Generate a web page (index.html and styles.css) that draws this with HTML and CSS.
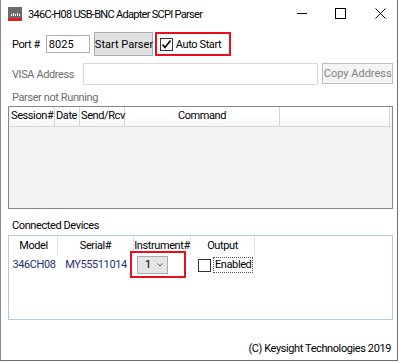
FILE: index.html
```html
<!DOCTYPE html>
<html lang="en">
<head>
    <meta charset="UTF-8">
    <title>346C-H08 USB-BNC Adapter SCPI Parser</title>
    <link rel="stylesheet" href="styles.css">
</head>
<body>
    <div class="window">
        <div class="titlebar">
            <div class="app-icon">
                <svg width="14" height="14" viewBox="0 0 14 14">
                    <rect x="0" y="0" width="14" height="11" fill="#6b6b6b"/>
                    <rect x="0" y="11" width="14" height="3" fill="#e01b24"/>
                    <rect x="3" y="7" width="1" height="2" fill="#fff"/>
                    <rect x="5" y="6" width="1" height="3" fill="#fff"/>
                    <rect x="7" y="7" width="1" height="2" fill="#fff"/>
                    <rect x="9" y="6" width="1" height="3" fill="#fff"/>
                    <rect x="11" y="7" width="1" height="2" fill="#fff"/>
                </svg>
            </div>
            <div class="title">346C-H08 USB-BNC Adapter SCPI Parser</div>
            <div class="controls">
                <svg class="ctl" width="46" height="30" viewBox="0 0 46 30">
                    <line x1="26" y1="13.5" x2="36" y2="13.5" stroke="#000" stroke-width="1"/>
                </svg>
                <svg class="ctl" width="40" height="30" viewBox="0 0 40 30">
                    <rect x="18.5" y="8.5" width="10" height="10" fill="none" stroke="#000" stroke-width="1"/>
                </svg>
                <svg class="ctl" width="40" height="30" viewBox="0 0 40 30">
                    <path d="M18.5 8.5 L28.5 18.5 M28.5 8.5 L18.5 18.5" stroke="#000" stroke-width="1"/>
                </svg>
            </div>
        </div>

        <div class="content">
            <div class="row port-row">
                <label class="lbl">Port #</label>
                <input class="port-input" type="text" value="8025">
                <button class="btn start-btn">Start Parser</button>
                <div class="highlight auto-start">
                    <span class="checkbox">
                        <svg width="11" height="11" viewBox="0 0 11 11">
                            <path d="M1.5 5.5 L4 8.5 L9.5 1.5" fill="none" stroke="#000" stroke-width="1.6"/>
                        </svg>
                    </span>
                    <span>Auto Start</span>
                </div>
            </div>

            <div class="row visa-row">
                <label class="lbl">VISA Address</label>
                <input class="visa-input" type="text" disabled>
                <button class="btn copy-btn" disabled>Copy Address</button>
            </div>

            <div class="status">Parser not Running</div>

            <div class="grid log-grid">
                <div class="grid-head">
                    <div class="hcell" style="width: 45px">Session#</div>
                    <div class="hcell" style="width: 25px">Date</div>
                    <div class="hcell" style="width: 45px">Send/Rcv</div>
                    <div class="hcell" style="width: 155px">Command</div>
                    <div class="hcell" style="width: 110px"></div>
                </div>
            </div>

            <div class="section-label">Connected Devices</div>

            <div class="grid dev-grid">
                <div class="grid-head">
                    <div class="hcell" style="width: 48px">Model</div>
                    <div class="hcell" style="width: 76px">Serial#</div>
                    <div class="hcell" style="width: 57px">Instrument#</div>
                    <div class="hcell" style="width: 64px">Output</div>
                </div>
                <div class="grid-row">
                    <div class="cell" style="width: 48px">346CH08</div>
                    <div class="cell" style="width: 76px">MY55511014</div>
                    <div class="cell inst-cell" style="width: 57px">
                        <div class="combo">
                            <span>1</span>
                            <svg width="6" height="4" viewBox="0 0 6 4">
                                <path d="M0.5 0.5 L3 3 L5.5 0.5" fill="none" stroke="#555" stroke-width="1"/>
                            </svg>
                        </div>
                        <div class="highlight-box"></div>
                    </div>
                    <div class="cell out-cell" style="width: 64px">
                        <span class="checkbox"></span>
                        <span class="focus-text">Enabled</span>
                    </div>
                </div>
            </div>

            <div class="footer">(C) Keysight Technologies 2019</div>
        </div>
    </div>
</body>
</html>
```

FILE: styles.css
```css
body {
    margin: 0;
    background-color: #fff;
    font-family: 'Roboto', 'Liberation Sans', sans-serif;
    font-size: 11px;
    letter-spacing: -0.4px;
    color: #000;
}

.window {
    width: 396px;
    height: 360px;
    background-color: #fff;
    border-left: 1px solid #8a8a8a;
    border-right: 1px solid #6e6e6e;
    border-bottom: 1px solid #6e6e6e;
    box-sizing: content-box;
    overflow: hidden;
}

.titlebar {
    display: flex;
    align-items: center;
    height: 30px;
}

.app-icon {
    width: 14px;
    height: 14px;
    margin-left: 7px;
    margin-top: -3px;
}

.title {
    margin-left: 6px;
    margin-top: -2px;
    font-size: 11px;
    letter-spacing: -0.7px;
    flex: 1;
    white-space: nowrap;
}

.controls {
    display: flex;
}

.ctl {
    display: block;
}

.content {
    padding: 0 4px 0 7px;
}

.row {
    display: flex;
    align-items: center;
    white-space: nowrap;
}

.lbl {
    margin-left: 4px;
}

.port-row {
    margin-top: 2px;
    height: 24px;
}

.port-input {
    margin-left: 6px;
    width: 44px;
    height: 18px;
    box-sizing: border-box;
    border: 1px solid #abadb3;
    font: inherit;
    padding: 0 2px;
}

.btn {
    font: inherit;
    color: #000;
    background-color: #e1e1e1;
    border: 1px solid #adadad;
    padding: 0;
    box-sizing: border-box;
    white-space: nowrap;
}

.start-btn {
    margin-left: 4px;
    width: 59px;
    height: 24px;
}

.highlight {
    border: 2px solid #e8101a;
    box-sizing: border-box;
}

.auto-start {
    margin-left: 2px;
    width: 76px;
    height: 24px;
    display: flex;
    align-items: center;
    gap: 3px;
    padding-left: 3px;
}

.checkbox {
    display: inline-flex;
    align-items: center;
    justify-content: center;
    flex-shrink: 0;
    width: 13px;
    height: 13px;
    box-sizing: border-box;
    border: 1px solid #333;
    background-color: #fff;
}

.visa-row {
    margin-top: 7px;
    height: 22px;
}

.visa-input {
    margin-left: 9px;
    width: 237px;
    height: 22px;
    box-sizing: border-box;
    border: 1px solid #d9d9d9;
    background-color: #fff;
}

.visa-row .lbl,
.status {
    color: #6d6d6d;
}

.copy-btn {
    margin-left: 4px;
    width: 71px;
    height: 21px;
    color: #838383;
    background-color: #f4f4f4;
    border-color: #bfbfbf;
    margin-top: -1px;
}

.status {
    margin: 4px 0 0 4px;
    height: 17px;
    line-height: 17px;
}

.grid {
    width: 385px;
    box-sizing: border-box;
}

.log-grid {
    margin-top: 0;
    height: 103px;
    border: 1px solid #828790;
    background-color: #f2f2f2;
}

.grid-head {
    display: flex;
    height: 19px;
    margin-left: 1px;
    background: linear-gradient(#fff, #fff 50%, #f4f4f4);
    border-bottom: 1px solid #d5d5d5;
}

.log-grid .grid-head {
    width: 381px;
}

.hcell {
    box-sizing: border-box;
    border-right: 1px solid #d5d5d5;
    text-align: center;
    line-height: 18px;
    white-space: nowrap;
}

.log-grid .hcell:first-child,
.log-grid .hcell:nth-child(2),
.log-grid .hcell:nth-child(3) {
    text-align: left;
    padding-left: 1px;
}

.section-label {
    margin: 8px 0 0 4px;
    height: 18px;
    line-height: 18px;
}

.dev-grid {
    margin-top: 0;
    height: 85px;
    border: 1px solid #b4cce2;
    background-color: #fff;
}

.dev-grid .grid-head {
    background: #fff;
    border-bottom: none;
}

.dev-grid .hcell {
    line-height: 20px;
    border-right-color: #e3e3e3;
}

.grid-row {
    display: flex;
    height: 20px;
    margin-left: 1px;
}

.cell {
    box-sizing: border-box;
    line-height: 20px;
    color: #27306e;
    white-space: nowrap;
    text-align: center;
}

.inst-cell {
    position: relative;
}

.combo {
    display: flex;
    align-items: center;
    gap: 6px;
    width: 31px;
    height: 18px;
    margin: 1px 0 0 3px;
    box-sizing: border-box;
    background-color: #e5e5e5;
    border: 1px solid #acacac;
    color: #000;
    padding-left: 7px;
}

.highlight-box {
    position: absolute;
    left: -4px;
    top: -4px;
    width: 56px;
    height: 27px;
    border: 2px solid #e8101a;
    box-sizing: border-box;
}

.out-cell {
    display: flex;
    align-items: center;
    gap: 2px;
    padding-left: 7px;
    color: #000;
}

.focus-text {
    border: 1px dotted #555;
    line-height: 14px;
    padding: 0 1px;
}

.footer {
    text-align: right;
    margin: 22px 0 0 0;
    padding-right: 2px;
}
```
